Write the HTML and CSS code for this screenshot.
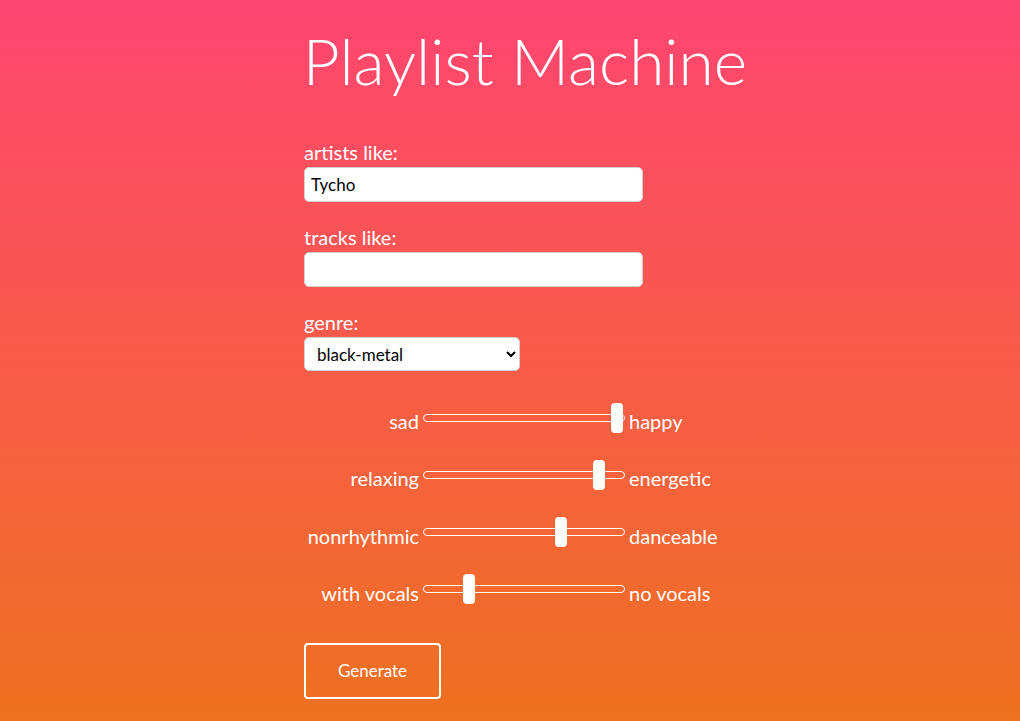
FILE: index.html
```html
<!DOCTYPE html>
<html lang="en">
<head>
<meta charset="utf-8">
<title>Playlist Machine</title>
<link rel="stylesheet" href="styles.css">
</head>
<body>
<div class="page">
  <main class="app">
    <h1 class="title">Playlist Machine</h1>
    <form class="form">
      <div class="field">
        <label class="label" for="artists">artists like:</label>
        <input class="text-input" id="artists" type="text" value="Tycho">
      </div>
      <div class="field">
        <label class="label" for="tracks">tracks like:</label>
        <input class="text-input" id="tracks" type="text" value="">
      </div>
      <div class="field">
        <label class="label" for="genre">genre:</label>
        <select class="select" id="genre">
          <option>black-metal</option>
        </select>
      </div>
      <div class="sliders">
        <span class="s-left">sad</span>
        <input class="range" type="range" min="0" max="1" step="0.005" value="0.995">
        <span class="s-right">happy</span>

        <span class="s-left">relaxing</span>
        <input class="range" type="range" min="0" max="1" step="0.005" value="0.9">
        <span class="s-right">energetic</span>

        <span class="s-left">nonrhythmic</span>
        <input class="range" type="range" min="0" max="1" step="0.005" value="0.695">
        <span class="s-right">danceable</span>

        <span class="s-left">with vocals</span>
        <input class="range" type="range" min="0" max="1" step="0.005" value="0.205">
        <span class="s-right">no vocals</span>
      </div>
      <button class="btn" type="button">Generate</button>
    </form>
  </main>
</div>
</body>
</html>
```

FILE: styles.css
```css
html, body {
  margin: 0;
  padding: 0;
}

body {
  min-height: 721px;
  background: linear-gradient(180deg, #ff4571 0%, #f07120 100%);
  font-family: Lato, "Open Sans", sans-serif;
  color: #fff;
}

.page {
  width: 472px;
  margin: 0 auto;
  padding-left: 30px;
  box-sizing: border-box;
  min-height: 721px;
}

.app {
  width: 442px;
}

.title {
  margin: 0 -20px;
  padding-top: 23px;
  font-size: 64px;
  font-weight: 300;
  line-height: 76px;
  text-align: center;
  letter-spacing: 0;
  white-space: nowrap;
}

.form {
  margin-top: 41px;
  display: flex;
  flex-direction: column;
}

.field {
  display: flex;
  flex-direction: column;
  align-items: flex-start;
  margin-bottom: 23px;
}

.label {
  font-size: 20px;
  line-height: 24px;
  margin-bottom: 3px;
}

.text-input {
  box-sizing: border-box;
  width: 339px;
  height: 35px;
  border: 1px solid #d0d0d0;
  border-radius: 5px;
  background: #fff;
  padding: 0 6px;
  font-family: Lato, sans-serif;
  font-size: 17px;
  color: #000;
  outline: none;
}

.select {
  box-sizing: border-box;
  width: 216px;
  height: 34px;
  border: 1px solid #d0d0d0;
  border-radius: 5px;
  background: #fff;
  padding: 0 8px;
  font-family: Lato, sans-serif;
  font-size: 17px;
  color: #000;
}

.sliders {
  display: grid;
  grid-template-columns: 115px 202px auto;
  column-gap: 4px;
  row-gap: 26.3px;
  align-items: center;
  margin-top: 8px;
}

.s-left,
.s-right {
  font-size: 20px;
  line-height: 24px;
  padding-top: 7px;
  white-space: nowrap;
}

.s-left {
  text-align: right;
}

.range {
  -webkit-appearance: none;
  appearance: none;
  width: 202px;
  height: 30px;
  margin: 0;
  padding: 0;
  background: transparent;
}

.range::-webkit-slider-runnable-track {
  box-sizing: border-box;
  height: 8px;
  border: 1px solid #fff;
  border-radius: 4px;
  background: transparent;
}

.range::-webkit-slider-thumb {
  -webkit-appearance: none;
  appearance: none;
  width: 12px;
  height: 30px;
  margin-top: -12px;
  border: none;
  border-radius: 4px;
  background: #fff;
}

.btn {
  align-self: flex-start;
  margin-top: 38px;
  width: 137px;
  height: 56px;
  border: 2px solid #fff;
  border-radius: 4px;
  background: transparent;
  color: #fff;
  font-family: Lato, sans-serif;
  font-size: 17px;
}
```
